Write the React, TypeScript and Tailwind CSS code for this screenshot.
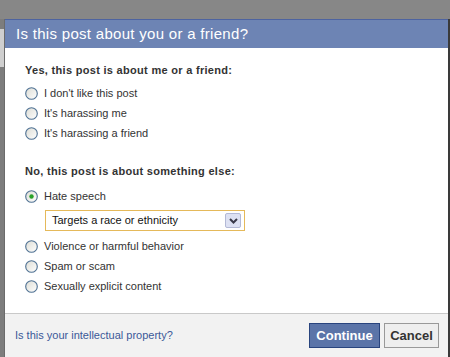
import { useState } from "react";

const yesReasons = ["I don't like this post", "It's harassing me", "It's harassing a friend"];
const noReasons = ["Violence or harmful behavior", "Spam or scam", "Sexually explicit content"];

function Radio({ checked }: { checked?: boolean }) {
  return (
    <svg width="13" height="13" viewBox="0 0 13 13" className="shrink-0">
      <defs>
        <linearGradient id={checked ? "rg1" : "rg0"} x1="0" y1="0" x2="1" y2="1">
          <stop offset="0" stopColor="#dcdcd4" />
          <stop offset="1" stopColor="#ffffff" />
        </linearGradient>
      </defs>
      <circle cx="6.5" cy="6.5" r="5.8" fill={`url(#${checked ? "rg1" : "rg0"})`} stroke="#4f7193" strokeWidth="1.1" />
      {checked && <circle cx="6.5" cy="6.5" r="2.2" fill="#2aa12a" />}
    </svg>
  );
}

function Option({ label, checked }: { label: string; checked?: boolean }) {
  return (
    <label className="flex h-[20px] items-center gap-[6px]">
      <Radio checked={checked} />
      <span className="text-[11px] text-[#333]">{label}</span>
    </label>
  );
}

export default function App() {
  const [kind] = useState("race");
  return (
    <div className="h-[357px] w-[450px] overflow-hidden bg-[#838383] font-['Liberation_Sans',Arial,sans-serif]">
      <div className="h-[19px] bg-[#878787]" />
      <div className="flex">
        <div className="flex w-[4px] flex-col bg-[#7d7d7d]">
          <div className="mt-[10px] h-[38px] bg-[#cfcfcf]" />
        </div>
        <div className="flex h-[338px] w-[444px] flex-col border-l border-[#6b6b6b] bg-white">
          <div className="flex h-[29px] items-center border-t border-[#4d63a0] bg-[#6d84b4] pl-[11px] text-[15px] tracking-[0.3px] text-white">
            Is this post about you or a friend?
          </div>
          <div className="flex-1 px-[20px] pt-[14px]">
            <div className="text-[11px] font-bold tracking-[0.3px] text-[#333]">Yes, this post is about me or a friend:</div>
            <div className="mt-[5px] flex flex-col">
              {yesReasons.map((r) => (
                <Option key={r} label={r} />
              ))}
            </div>
            <div className="mt-[19px] text-[11px] font-bold tracking-[0.3px] text-[#333]">No, this post is about something else:</div>
            <div className="mt-[7px] flex flex-col">
              <Option label="Hate speech" checked />
              <div className="mb-[5px] ml-[20px] mt-[4px] flex h-[21px] w-[200px] items-center justify-between border border-[#e5b95a] bg-white pl-[6px] pr-[3px]">
                <span className="text-[11px] text-[#111]">{kind === "race" ? "Targets a race or ethnicity" : ""}</span>
                <span className="flex h-[15px] w-[16px] items-center justify-center rounded-[2px] border border-[#b3b9d6] bg-[#dde1f3]">
                  <svg width="9" height="6" viewBox="0 0 9 6">
                    <path d="M1 1 L4.5 4.5 L8 1" fill="none" stroke="#3a3a4a" strokeWidth="2" />
                  </svg>
                </span>
              </div>
              {noReasons.map((r) => (
                <Option key={r} label={r} />
              ))}
            </div>
          </div>
          <div className="flex h-[44px] items-center justify-between border-t border-[#c9c9c9] bg-[#f2f2f2] pl-[10px] pr-[9px]">
            <a className="text-[11px] text-[#3b5998]">Is this your intellectual property?</a>
            <div className="flex gap-[4px]">
              <button className="h-[25px] w-[71px] border border-[#29447e] bg-[#5b74a8] text-[13px] font-bold text-white">
                Continue
              </button>
              <button className="h-[25px] w-[55px] border border-[#999] bg-[#eeeeee] text-[13px] font-bold text-[#333]">
                Cancel
              </button>
            </div>
          </div>
        </div>
        <div className="w-[2px] bg-[#3a3a3a]" />
      </div>
    </div>
  );
}
